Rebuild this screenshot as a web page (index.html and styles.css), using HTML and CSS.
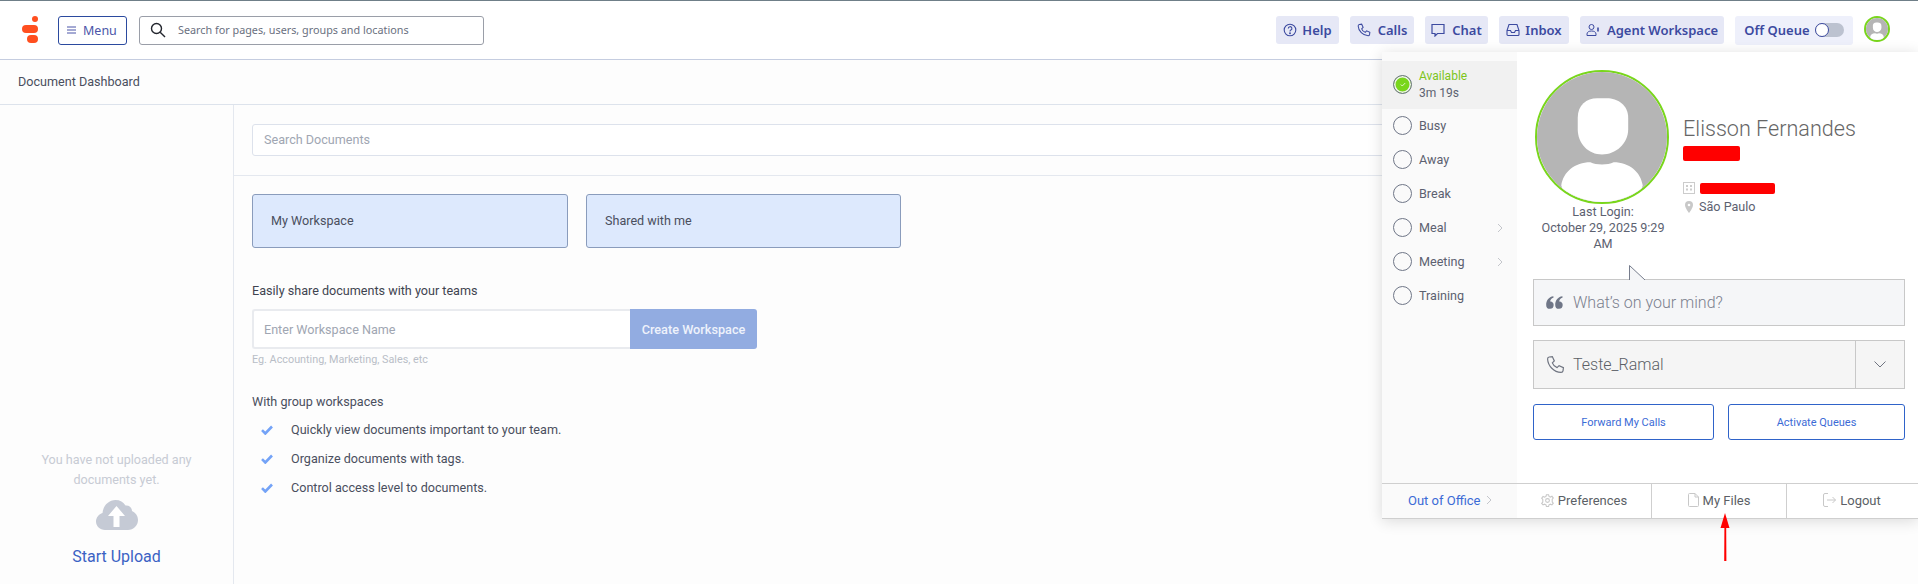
FILE: index.html
```html
<!DOCTYPE html>
<html lang="en">
<head>
<meta charset="utf-8">
<title>Document Dashboard</title>
<link rel="stylesheet" href="styles.css">
</head>
<body>
<header class="topbar">
  <svg class="logo" width="16" height="27" viewBox="0 0 16 27"><circle cx="13" cy="3" r="3" fill="#ff4f1f"/><rect x="0" y="9" width="16" height="8" rx="4" fill="#ff4f1f"/><rect x="5" y="19" width="11" height="8" rx="4" fill="#ff4f1f"/></svg>
  <button class="menu-btn"><svg width="9" height="8" viewBox="0 0 9 8"><path d="M0 1h9M0 4h9M0 7h9" stroke="#4a55a8" stroke-width="1"/></svg><span>Menu</span></button>
  <div class="global-search">
    <svg width="16" height="16" viewBox="0 0 16 16" fill="none" stroke="#23262e" stroke-width="1.4"><circle cx="6.5" cy="6.5" r="5"/><path d="M10.2 10.2 15 15"/></svg>
    <span>Search for pages, users, groups and locations</span>
  </div>
  <nav class="actions">
    <a class="act act-help"><svg width="14" height="14" viewBox="0 0 14 14" fill="none" stroke="#3c4aa0" stroke-width="1.1"><circle cx="7" cy="7" r="5.8"/><path d="M5.3 5.5a1.8 1.8 0 1 1 2.6 1.6c-.6.3-.9.7-.9 1.3"/><circle cx="7" cy="10.2" r=".4"/></svg>Help</a>
    <a class="act act-calls"><svg width="14" height="14" viewBox="0 0 24 24" fill="none" stroke="#3c4aa0" stroke-width="1.8"><path d="M4 2.5 8 2l2.5 5.5L8 10c1 2.800 3.200 5 6 6l2.500-2.500L22 16l-.5 4c-.2 1.200-1.300 2-2.500 2C10 21.500 2.500 14 2 5c0-1.200.8-2.300 2-2.500z"/></svg>Calls</a>
    <a class="act act-chat"><svg width="14" height="14" viewBox="0 0 14 14" fill="none" stroke="#3c4aa0" stroke-width="1.2"><path d="M1 1.500h12v9H6.500L4 13v-2.500H1z"/></svg>Chat</a>
    <a class="act act-inbox"><svg width="14" height="14" viewBox="0 0 14 14" fill="none" stroke="#3c4aa0" stroke-width="1.1"><path d="M3 1.500h8l2 6v4a1 1 0 0 1-1 1H2a1 1 0 0 1-1-1v-4zM1 7.500h3.500l1 2h3l1-2H13"/></svg>Inbox</a>
    <a class="act act-agent"><svg width="14" height="14" viewBox="0 0 14 14" fill="none" stroke="#3c4aa0" stroke-width="1"><circle cx="5.500" cy="4" r="2.500"/><path d="M1 12.500V11c0-2 2-3 4.500-3S10 9 10 11v1.500z"/><path d="M12 4.500v4" stroke-width="1.600"/></svg>Agent Workspace</a>
    <div class="act act-queue"><span>Off Queue</span><span class="toggle"><span class="knob"></span></span></div>
    <div class="mini-avatar"><svg width="22" height="22" viewBox="0 0 134 134"><rect width="134" height="134" fill="#b5b5b5"/><path d="M42 47c0-13 9-20 20-20h10c11 0 22 7 22 20v12c0 15-13 26-27 26S42 74 42 59z" fill="#fff"/><path d="M25 117c2-14 14-24 30-24 6 3 18 3 24 0 16 0 28 10 30 24l-6 17H31z" fill="#fff"/></svg></div>
  </nav>
</header>
<div class="subhead">Document Dashboard</div>
<main class="layout">
  <aside class="sidebar">
    <p class="empty">You have not uploaded any documents yet.</p>
    <svg class="cloud" width="42" height="30" viewBox="0 0 42 30"><path d="M9 30C4 30 0 26 0 21.500 0 17.500 3 14 6.500 13 7 6 12.500 0 19.500 0 24 0 27.500 2 29.500 5.500 33 5 36 7.500 36 11c3.500 1.500 6 5 6 9 0 5.500-4.500 10-10 10z" fill="#c5cad5"/><path d="M20.500 6 29 16h-5.500v11h-6V16H12z" fill="#fff"/></svg>
    <a class="upload">Start Upload</a>
  </aside>
  <section class="content">
    <div class="doc-search-row"><div class="doc-search">Search Documents</div></div>
    <div class="workspace-body">
      <div class="tiles">
        <div class="tile">My Workspace</div>
        <div class="tile tile-shared">Shared with me</div>
      </div>
      <p class="share-title">Easily share documents with your teams</p>
      <div class="create-row">
        <div class="create-input">Enter Workspace Name</div>
        <button class="create-btn">Create Workspace</button>
      </div>
      <p class="hint">Eg. Accounting, Marketing, Sales, etc</p>
      <p class="group-title">With group workspaces</p>
      <ul class="benefits">
        <li><svg width="12" height="10" viewBox="0 0 12 10"><path d="M1 5.200 4.300 8.500 11 1.500" fill="none" stroke="#74a3f7" stroke-width="2.600"/></svg>Quickly view documents important to your team.</li>
        <li><svg width="12" height="10" viewBox="0 0 12 10"><path d="M1 5.200 4.300 8.500 11 1.500" fill="none" stroke="#74a3f7" stroke-width="2.600"/></svg>Organize documents with tags.</li>
        <li><svg width="12" height="10" viewBox="0 0 12 10"><path d="M1 5.200 4.300 8.500 11 1.500" fill="none" stroke="#74a3f7" stroke-width="2.600"/></svg>Control access level to documents.</li>
      </ul>
    </div>
  </section>
</main>

<div class="panel">
  <div class="panel-main">
    <ul class="status-col">
      <li class="status status-on">
        <span class="radio radio-on"><svg width="6" height="5" viewBox="0 0 8 6"><path d="M1 3l2 2 4-4" fill="none" stroke="#fff" stroke-width="1"/></svg></span>
        <span class="status-text"><span class="status-name">Available</span><span>3m 19s</span></span>
      </li>
      <li class="status"><span class="radio"></span><span>Busy</span></li>
      <li class="status"><span class="radio"></span><span>Away</span></li>
      <li class="status"><span class="radio"></span><span>Break</span></li>
      <li class="status"><span class="radio"></span><span>Meal</span><svg class="chev" width="6" height="10" viewBox="0 0 6 10"><path d="M1 1l4 4-4 4" fill="none" stroke="#c4c6cb"/></svg></li>
      <li class="status"><span class="radio"></span><span>Meeting</span><svg class="chev" width="6" height="10" viewBox="0 0 6 10"><path d="M1 1l4 4-4 4" fill="none" stroke="#c4c6cb"/></svg></li>
      <li class="status"><span class="radio"></span><span>Training</span></li>
    </ul>
    <div class="profile">
      <div class="identity">
        <div class="photo-col">
          <div class="photo"><svg width="130" height="130" viewBox="0 0 134 134"><rect width="134" height="134" fill="#b5b5b5"/><path d="M42 47c0-13 9-20 20-20h10c11 0 22 7 22 20v12c0 15-13 26-27 26S42 74 42 59z" fill="#fff"/><path d="M25 117c2-14 14-24 30-24 6 3 18 3 24 0 16 0 28 10 30 24l-6 17H31z" fill="#fff"/></svg></div>
          <p class="last-login">Last Login:<br>October 29, 2025 9:29 AM</p>
        </div>
        <div class="who">
          <h2 class="name">Elisson Fernandes</h2>
          <div class="redact redact-title"></div>
          <div class="who-line org"><svg width="12" height="12" viewBox="0 0 12 12"><rect x=".5" y=".5" width="11" height="11" fill="none" stroke="#ccc"/><path d="M3 3h2v2H3zM7 3h2v2H7zM3 6.500h2v2H3zM7 6.500h2v2H7z" fill="#ccc"/></svg><div class="redact redact-org"></div></div>
          <div class="who-line city"><svg width="12" height="12" viewBox="0 0 12 12"><path d="M6 0a4 4 0 0 1 4 4c0 3-4 8-4 8S2 7 2 4a4 4 0 0 1 4-4z" fill="#c8c8c8"/><circle cx="6" cy="4" r="1.300" fill="#fff"/></svg><span>São Paulo</span></div>
        </div>
      </div>
      <div class="mind">
        <svg class="tail" width="17" height="15" viewBox="0 0 17 15"><path d="M.5 15V.5L16 15" fill="#f5f6f8" stroke="#767c8c"/></svg>
        <svg width="17" height="13" viewBox="0 0 16 12" fill="#6f7687"><path d="M7 0v1.500C5 2 4 3.500 4 5a3.500 3.500 0 1 1-3.800 3.500C0 4 2.500.6 7 0zM15.500 0v1.500c-2 .5-3 2-3 3.500a3.500 3.500 0 1 1-3.800 3.500C8.500 4 11 .6 15.500 0z"/></svg>
        <span>What’s on your mind?</span>
      </div>
      <div class="phone">
        <div class="phone-main">
          <svg width="19" height="19" viewBox="0 0 24 24" fill="none" stroke="#6f7480" stroke-width="1.500"><path d="M4 2.500 8 2l2.500 5.500L8 10c1 2.800 3.200 5 6 6l2.500-2.500L22 16l-.5 4c-.2 1.200-1.300 2-2.500 2C10 21.500 2.500 14 2 5c0-1.200.8-2.300 2-2.500z"/></svg>
          <span>Teste_Ramal</span>
        </div>
        <div class="phone-caret"><svg width="12" height="7" viewBox="0 0 12 7"><path d="M.5.500 6 6 11.500.5" fill="none" stroke="#6f7480"/></svg></div>
      </div>
      <div class="profile-btns">
        <button class="outline outline-a">Forward My Calls</button>
        <button class="outline outline-b">Activate Queues</button>
      </div>
    </div>
  </div>
  <div class="panel-foot">
    <a class="foot-ooo">Out of Office <svg width="6" height="10" viewBox="0 0 6 10"><path d="M1 1l4 4-4 4" fill="none" stroke="#c4c6cb"/></svg></a>
    <a class="foot-item foot-pref"><svg width="13" height="13" viewBox="0 0 24 24" fill="none" stroke="#c8c8c8" stroke-width="2"><circle cx="12" cy="12" r="3.500"/><path d="M10 1.500h4l.8 3 2.600 1.200 2.800-1.500 2.500 3.300-2 2.200v5l2 2.300-2.500 3.200-2.800-1.400-2.600 1.200-.8 3h-4l-.8-3-2.600-1.200-2.800 1.400L1.300 17.300l2-2.300v-5l-2-2.200 2.500-3.300 2.800 1.500L9.200 4.500z"/></svg>Preferences</a>
    <a class="foot-item"><svg width="11" height="14" viewBox="0 0 11 14" fill="none" stroke="#c8c8c8"><path d="M1.500.5H7l3.500 3.500v8.500a1 1 0 0 1-1 1h-8a1 1 0 0 1-1-1V1.500a1 1 0 0 1 1-1zM7 .5V4h3.500"/></svg>My Files</a>
    <a class="foot-item foot-logout"><svg width="13" height="14" viewBox="0 0 13 14" fill="none" stroke="#c8c8c8"><path d="M5 .5H2a1.500 1.500 0 0 0-1.500 1.500v10A1.500 1.500 0 0 0 2 13.500h3M4 7h8.500M9.500 4l3 3-3 3"/></svg>Logout</a>
  </div>
</div>
<svg class="arrow" width="10" height="48" viewBox="0 0 10 48"><path d="M5 0 9.500 15H6.200l.2 33H4.200L4.400 15H.5z" fill="#f00"/></svg>
</body>
</html>
```
FILE: styles.css
```css
* { box-sizing: border-box; }
html, body { margin: 0; padding: 0; }
body {
  position: relative;
  width: 1918px;
  height: 584px;
  overflow: hidden;
  background: #fdfdfd;
  font-family: Roboto, "Liberation Sans", sans-serif;
  font-size: 12.6px;
  color: #4a4f5e;
}
p, h2, ul { margin: 0; padding: 0; }
ul { list-style: none; }
button { font-family: inherit; cursor: pointer; }
svg { flex: none; }

.topbar {
  display: flex;
  align-items: center;
  height: 60px;
  padding: 0 28px 0 22px;
  background: #fff;
  border-top: 1px solid #6f7f88;
  border-bottom: 1px solid #c5cde0;
  font-family: "Noto Sans", sans-serif;
}
.logo { margin-top: -2px; }
.menu-btn {
  display: flex;
  align-items: center;
  gap: 7px;
  width: 69px;
  height: 29px;
  margin-left: 20px;
  padding: 0 0 0 8px;
  background: #fff;
  border: 1px solid #2b4a9f;
  border-radius: 3px;
  color: #4a55a8;
  font: 12.5px "Noto Sans", sans-serif;
}
.global-search {
  display: flex;
  align-items: center;
  gap: 12px;
  width: 345px;
  height: 29px;
  margin-left: 12px;
  padding: 0 0 2px 10px;
  border: 1px solid #9a9ea8;
  border-radius: 3px;
  font-size: 10.8px;
  color: #6a7080;
}
.global-search svg { margin-top: 2px; }
.actions { display: flex; align-items: center; gap: 11px; margin-left: auto; }
.act {
  display: flex;
  align-items: center;
  justify-content: center;
  gap: 5px;
  height: 28px;
  background: #e6e8f6;
  border-radius: 3px;
  color: #3c4aa0;
  font-size: 13px;
  font-weight: 600;
}
.act-help { width: 63px; }
.act-calls { width: 64px; gap: 7px; }
.act-chat { width: 63px; gap: 7px; }
.act-inbox { width: 70px; }
.act-agent { width: 144px; gap: 7px; }
.act-queue { width: 118px; height: 29px; gap: 5px; background: #eef0fb; }
.toggle { position: relative; width: 29px; height: 14px; border-radius: 7px; background: #bcc2d0; }
.knob {
  position: absolute;
  left: 0;
  top: 0;
  width: 14px;
  height: 14px;
  background: #fff;
  border: 1.5px solid #3c4aa0;
  border-radius: 50%;
}
.mini-avatar {
  width: 26px;
  height: 26px;
  border: 2px solid #79d61c;
  border-radius: 50%;
  overflow: hidden;
  margin-bottom: 2px;
}
.mini-avatar svg { display: block; }

.subhead {
  height: 45px;
  padding: 14px 0 0 18px;
  line-height: 15px;
  border-bottom: 1px solid #dde3ec;
  color: #4a4f5e;
}

.layout { display: flex; height: 479px; }
.sidebar {
  display: flex;
  flex-direction: column;
  align-items: center;
  width: 234px;
  flex: none;
  padding: 345px 28px 0;
  border-right: 1px solid #e4e8ef;
}
.empty { line-height: 20px; text-align: center; color: #c7cbd4; }
.cloud { margin-top: 10px; }
.upload { margin-top: 15px; font-size: 16px; line-height: 24px; color: #3b62c4; }
.content { flex: 1; min-width: 0; }
.doc-search-row { height: 71px; padding: 19px 0 0 18px; border-bottom: 1px solid #e4e8ef; }
.doc-search {
  height: 32px;
  padding-left: 11px;
  line-height: 30px;
  border: 1px solid #dde2ec;
  border-radius: 3px;
  background: #fff;
  color: #a0a6b2;
}
.workspace-body { padding: 18px 0 0 18px; }
.tiles { display: flex; gap: 18px; }
.tile {
  width: 316px;
  height: 54px;
  padding-left: 18px;
  line-height: 52px;
  background: #dde9fd;
  border: 1px solid #8a9cbc;
  border-radius: 3px;
  color: #4a4f5e;
}
.tile-shared { width: 315px; }
.share-title { margin-top: 35px; line-height: 16px; color: #3f4450; }
.create-row { display: flex; margin-top: 10px; }
.create-input {
  width: 378px;
  height: 40px;
  padding-left: 10px;
  line-height: 38px;
  background: #fff;
  border: 2px solid #e9ebef;
  border-right: 0;
  border-radius: 3px 0 0 3px;
  color: #a0a6b2;
}
.create-btn {
  width: 127px;
  height: 40px;
  padding: 0;
  background: #92ace1;
  border: 0;
  border-radius: 0 3px 3px 0;
  color: #eef2fb;
  font-size: 12.7px;
  font-weight: 500;
}
.hint { margin-top: 4px; font-size: 10.8px; line-height: 13px; color: #b9bdc7; }
.group-title { margin-top: 28px; line-height: 16px; color: #4a4f5e; }
.benefits { margin-top: 5px; }
.benefits li { display: flex; align-items: center; height: 29px; padding-left: 9px; gap: 18px; color: #4a4f5e; }

.panel {
  position: absolute;
  left: 1382px;
  top: 52px;
  width: 536px;
  height: 467px;
  display: flex;
  flex-direction: column;
  background: #fff;
  border-bottom: 1px solid #cfcfcf;
  box-shadow: 0 2px 14px rgba(0, 0, 0, .14);
}
.panel-main { display: flex; flex: 1; min-height: 0; }
.status-col { width: 135px; flex: none; padding-top: 9px; background: #fafafa; }
.status {
  display: flex;
  align-items: center;
  gap: 7px;
  height: 34px;
  padding: 0 0 1px 11px;
  color: #5c6170;
}
.status-on { height: 48px; background: #f1f1f1; }
.radio {
  display: flex;
  align-items: center;
  justify-content: center;
  width: 19px;
  height: 19px;
  flex: none;
  border: 1px solid #6f7687;
  border-radius: 50%;
}
.radio-on { background: #79d61c; box-shadow: inset 0 0 0 1.5px #f1f1f1; }
.status-text { display: flex; flex-direction: column; line-height: 17px; font-size: 12px; }
.status-name { color: #7cc51a; }
.chev { margin-left: auto; margin-right: 14px; }

.profile { flex: 1; padding: 18px 13px 0 16px; }
.identity { display: flex; height: 209px; }
.photo-col { width: 138px; flex: none; padding-left: 2px; }
.photo { width: 134px; height: 134px; border: 2px solid #79d61c; border-radius: 50%; overflow: hidden; }
.photo svg { display: block; }
.last-login { line-height: 16px; text-align: center; color: #5c6170; }
.who { margin-left: 12px; padding-top: 46px; }
.name { font-size: 21.6px; font-weight: 300; line-height: 26px; color: #666; white-space: nowrap; }
.redact { background: #f00; border-radius: 2px; }
.redact-title { width: 57px; height: 15px; margin-top: 4px; }
.redact-org { width: 75px; height: 11px; }
.who-line { display: flex; align-items: center; gap: 4px; }
.org { margin-top: 21px; gap: 5px; }
.city { margin-top: 5px; color: #5c6170; }
.mind {
  position: relative;
  display: flex;
  align-items: center;
  gap: 10px;
  height: 47px;
  padding-left: 12px;
  background: #f5f6f8;
  border: 1px solid #c8c8c8;
  font-size: 16px;
  font-weight: 300;
  color: #7b808e;
}
.tail { position: absolute; left: 95px; top: -15px; }
.phone {
  display: flex;
  height: 49px;
  margin-top: 14px;
  background: #f5f5f5;
  border: 1px solid #c8c8c8;
  font-size: 16px;
  font-weight: 300;
  color: #5b5f66;
}
.phone-main { display: flex; align-items: center; gap: 8px; flex: 1; padding: 0 0 1px 12px; }
.phone-caret { display: flex; align-items: center; justify-content: center; width: 49px; border-left: 1px solid #c8c8c8; }
.profile-btns { display: flex; gap: 14px; margin-top: 15px; }
.outline {
  height: 36px;
  padding: 0;
  background: #fff;
  border: 1px solid #2f63c9;
  border-radius: 3px;
  color: #3b6bd6;
  font-size: 11px;
}
.outline-a { width: 181px; }
.outline-b { width: 177px; }
.panel-foot { display: flex; height: 35px; flex: none; border-top: 1px solid #cfcfcf; font-size: 13px; }
.foot-ooo {
  display: flex;
  align-items: center;
  gap: 6px;
  width: 135px;
  padding: 0 0 2px 26px;
  background: #fafafa;
  color: #3b6bd6;
}
.foot-item {
  display: flex;
  align-items: center;
  justify-content: center;
  gap: 4px;
  width: 135px;
  padding-bottom: 2px;
  border-left: 1px solid #cfcfcf;
  color: #5b5f66;
}
.foot-pref { width: 134px; border-left: 0; }
.foot-logout { width: 131px; }
.arrow { position: absolute; left: 1720px; top: 513px; }
```
